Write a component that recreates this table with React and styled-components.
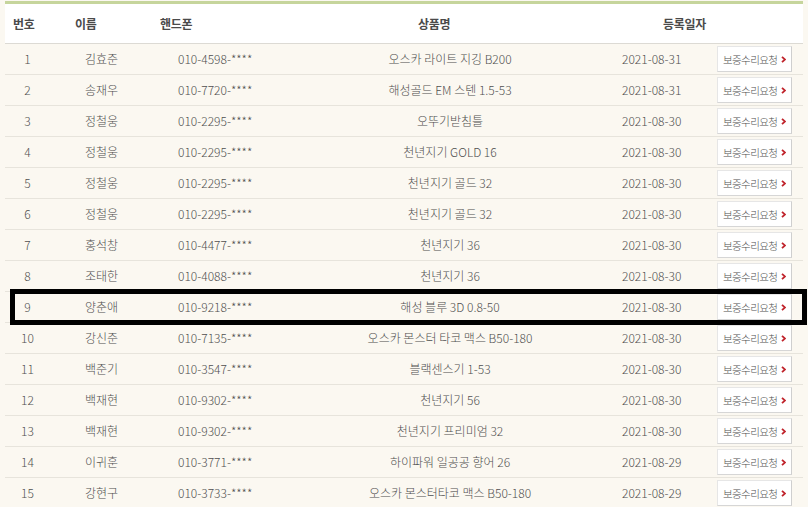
import React from "react";
import styled, { createGlobalStyle } from "styled-components";

const Global = createGlobalStyle`
  html, body { margin: 0; padding: 0; background: #fbf8f1; }
  body { font-family: "Noto Sans CJK KR", "Noto Sans", sans-serif; overflow: hidden; }
`;

const COLS = "45px 100px 150px 300px 112px 91px";

const Page = styled.div`
  position: relative;
  width: 808px;
  height: 507px;
  padding: 1px 5px 0 5px;
  box-sizing: border-box;
  overflow: hidden;
`;

const Table = styled.div`
  width: 798px;
  border-top: 3px solid #c6d59c;
`;

const HeadRow = styled.div`
  display: grid;
  grid-template-columns: ${COLS};
  height: 39px;
  align-items: center;
  background: #fff;
  border-bottom: 1px solid #dcdad4;
`;

const HeadCell = styled.div`
  padding-left: ${(p) => p.$pad}px;
  font-size: 12px;
  font-weight: 700;
  color: #4a4a4a;
  line-height: 16px;
  letter-spacing: -0.3px;
  white-space: nowrap;
`;

const Row = styled.div`
  display: grid;
  grid-template-columns: ${COLS};
  height: 30px;
  align-items: center;
  border-bottom: 1px solid #e7e4dc;
`;

const Cell = styled.div`
  padding-left: ${(p) => p.$pad || 0}px;
  text-align: ${(p) => p.$align || "left"};
  font-size: 12px;
  font-weight: 300;
  color: #4f4f4f;
  line-height: 16px;
  white-space: nowrap;
`;

const Button = styled.div`
  margin-left: 5px;
  width: 75px;
  height: 26px;
  box-sizing: border-box;
  background: #fff;
  border: 1px solid #e6e6e6;
  border-right-color: #cfcfcf;
  border-bottom-color: #d6d6d6;
  display: flex;
  align-items: center;
  padding-left: 5px;
  gap: 4px;
  font-size: 10.5px;
  font-weight: 300;
  color: #4f4f4f;
  letter-spacing: -0.6px;
  white-space: nowrap;
`;

const Highlight = styled.div`
  position: absolute;
  left: 10px;
  top: 289px;
  width: 797px;
  height: 36px;
  box-sizing: border-box;
  border: 5px solid #000;
  pointer-events: none;
`;

const Arrow = () => (
  <svg width="5" height="7" viewBox="0 0 5 7">
    <path d="M1 0.8 L4 3.5 L1 6.2" fill="none" stroke="#c0242c" strokeWidth="1.8" />
  </svg>
);

const rows = [
  ["1", "김효준", "010-4598-****", "오스카 라이트 지깅 B200", "2021-08-31"],
  ["2", "송재우", "010-7720-****", "해성골드 EM 스텐 1.5-53", "2021-08-31"],
  ["3", "정철웅", "010-2295-****", "오뚜기받침틀", "2021-08-30"],
  ["4", "정철웅", "010-2295-****", "천년지기 GOLD 16", "2021-08-30"],
  ["5", "정철웅", "010-2295-****", "천년지기 골드 32", "2021-08-30"],
  ["6", "정철웅", "010-2295-****", "천년지기 골드 32", "2021-08-30"],
  ["7", "홍석창", "010-4477-****", "천년지기 36", "2021-08-30"],
  ["8", "조태한", "010-4088-****", "천년지기 36", "2021-08-30"],
  ["9", "양춘애", "010-9218-****", "해성 블루 3D 0.8-50", "2021-08-30"],
  ["10", "강신준", "010-7135-****", "오스카 몬스터 타코 맥스 B50-180", "2021-08-30"],
  ["11", "백준기", "010-3547-****", "블랙센스기 1-53", "2021-08-30"],
  ["12", "백재현", "010-9302-****", "천년지기 56", "2021-08-30"],
  ["13", "백재현", "010-9302-****", "천년지기 프리미엄 32", "2021-08-30"],
  ["14", "이귀훈", "010-3771-****", "하이파워 일공공 향어 26", "2021-08-29"],
  ["15", "강현구", "010-3733-****", "오스카 몬스터타코 맥스 B50-180", "2021-08-29"],
];

export default function App() {
  return (
    <Page>
      <Global />
      <Table>
        <HeadRow>
          <HeadCell $pad={8}>번호</HeadCell>
          <HeadCell $pad={25}>이름</HeadCell>
          <HeadCell $pad={10}>핸드폰</HeadCell>
          <HeadCell $pad={118}>상품명</HeadCell>
          <HeadCell $pad={63}>등록일자</HeadCell>
          <HeadCell $pad={0}></HeadCell>
        </HeadRow>
        {rows.map((r) => (
          <Row key={r[0]}>
            <Cell $align="center">{r[0]}</Cell>
            <Cell $pad={35}>{r[1]}</Cell>
            <Cell $pad={28}>{r[2]}</Cell>
            <Cell $align="center">{r[3]}</Cell>
            <Cell $pad={22}>{r[4]}</Cell>
            <div>
              <Button>
                보증수리요청
                <Arrow />
              </Button>
            </div>
          </Row>
        ))}
      </Table>
      <Highlight />
    </Page>
  );
}
